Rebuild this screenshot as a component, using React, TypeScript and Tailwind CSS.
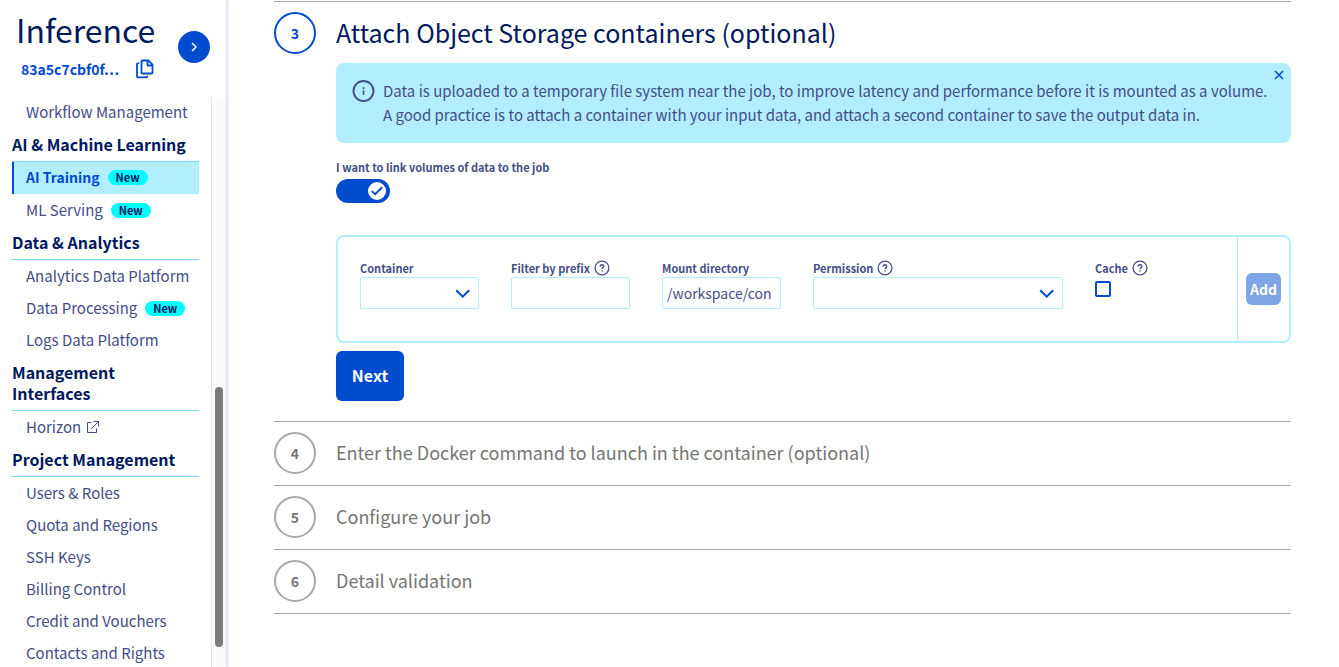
import { useState } from "react";
import type { ReactNode } from "react";

type NavItem = { label: string; isNew?: boolean; active?: boolean; external?: boolean };
type NavGroup = { title?: string; items: NavItem[] };

const groups: NavGroup[] = [
  { items: [{ label: "Workflow Management" }] },
  {
    title: "AI & Machine Learning",
    items: [
      { label: "AI Training", isNew: true, active: true },
      { label: "ML Serving", isNew: true },
    ],
  },
  {
    title: "Data & Analytics",
    items: [
      { label: "Analytics Data Platform" },
      { label: "Data Processing", isNew: true },
      { label: "Logs Data Platform" },
    ],
  },
  { title: "Management Interfaces", items: [{ label: "Horizon", external: true }] },
  {
    title: "Project Management",
    items: [
      { label: "Users & Roles" },
      { label: "Quota and Regions" },
      { label: "SSH Keys" },
      { label: "Billing Control" },
      { label: "Credit and Vouchers" },
      { label: "Contacts and Rights" },
    ],
  },
];

function CopyIcon() {
  return (
    <svg className="h-5 w-5" viewBox="0 0 20 20" fill="none" stroke="currentColor" strokeWidth="1.8" strokeLinejoin="round" strokeLinecap="round">
      <path d="M7.300 1.500h6L17.500 5.700v8a.8.8 0 0 1-.8.8H7.300a.8.8 0 0 1-.8-.8V2.300a.8.8 0 0 1 .8-.8Z" />
      <path d="M12.500 2v4.500h4.600" />
      <path d="M3.500 4.300h-.6a.9.9 0 0 0-.9.9v12.200a.9.9 0 0 0 .9.9h8.500a.9.9 0 0 0 .9-.9" />
    </svg>
  );
}

function ExternalIcon() {
  return (
    <svg className="h-3 w-3" viewBox="0 0 12 12" fill="none" stroke="currentColor">
      <path d="M4.500 1.500h-4v10h9V7.500M6.500 .5h5v5M11.500 .5 4 8" />
    </svg>
  );
}

function HelpIcon() {
  return (
    <svg className="h-4 w-4 shrink-0" viewBox="0 0 16 16" fill="none" stroke="currentColor">
      <circle cx="8" cy="8" r="6.900" strokeWidth="1.300" />
      <path d="M6.200 6.500c0-1.100.8-1.800 1.800-1.800s1.800.7 1.800 1.600c0 1.300-1.700 1.400-1.700 2.800" strokeWidth="1.400" />
      <path d="M8.100 10.200v1.400" strokeWidth="1.500" />
    </svg>
  );
}

function Chevron() {
  return (
    <svg className="pointer-events-none absolute right-2 top-3 h-2.5 w-4" viewBox="0 0 16 10" fill="none" stroke="#004bce" strokeWidth="2">
      <path d="m1.200 1.200 6.500 6.500 6.500-6.500" />
    </svg>
  );
}

function Badge() {
  return <span className="ml-2 rounded-full bg-[#00fdff] px-2 text-[11px] leading-[15px] font-bold text-[#00185e]">New</span>;
}

function Sidebar() {
  return (
    <aside className="z-10 flex w-[226px] shrink-0 flex-col bg-white shadow-[1px_0_3px_1px_#dcdff2]">
      <header className="flex h-[97px] shrink-0 items-start justify-between pr-4 pl-4">
        <div>
          <h1 className="mt-1.5 pb-0.5 text-[32px] leading-[46px] text-[#00185e]">Inference</h1>
          <div className="flex items-center gap-4 pl-[5px]">
            <span className="text-sm leading-[30px] font-semibold text-[#004bce]">83a5c7cbf0f…</span>
            <button type="button" aria-label="Copy project ID" className="text-[#004bce]">
              <CopyIcon />
            </button>
          </div>
        </div>
        <button type="button" aria-label="Collapse menu" className="mt-[31px] flex size-8 shrink-0 items-center justify-center rounded-full bg-[#004bce] text-white">
          <svg className="h-3 w-2" viewBox="0 0 8 12" fill="none" stroke="currentColor" strokeWidth="1.500">
            <path d="m2 2 4 4-4 4" />
          </svg>
        </button>
      </header>
      <div className="flex min-h-0 grow">
        <nav aria-label="Public Cloud" className="-mt-px grow overflow-hidden pr-3 pl-3">
          {groups.map((group, i) => (
            <section key={i}>
              {group.title && (
                <h2 className="border-b border-[#7cd5fb] py-1.5 pr-2 text-base leading-[21px] font-bold text-[#00185e]">{group.title}</h2>
              )}
              <ul>
                {group.items.map((item) => (
                  <li key={item.label}>
                    <a
                      href="#"
                      aria-current={item.active ? "page" : undefined}
                      className={
                        item.active
                          ? "flex h-8 items-center border-l-2 border-[#004bce] bg-[#b2eeff] pb-0.5 pl-3 text-sm font-semibold whitespace-nowrap text-[#004bce]"
                          : "flex h-8 items-center pl-3.5 text-[15px] whitespace-nowrap text-[#454d88]"
                      }
                    >
                      {item.label}
                      {item.isNew && <Badge />}
                      {item.external && (
                        <span className="ml-1.5">
                          <ExternalIcon />
                        </span>
                      )}
                    </a>
                  </li>
                ))}
              </ul>
            </section>
          ))}
        </nav>
        <div aria-hidden="true" className="flex w-[15px] shrink-0 flex-col items-center border-l border-[#e4e4e6] bg-[#fafafa]">
          <div className="grow-[290] basis-0" />
          <div className="w-2 grow-[260] basis-0 rounded-full bg-[#7b7b7b]" />
          <div className="grow-[20] basis-0" />
        </div>
      </div>
    </aside>
  );
}

function Step({ number, title, active, children }: { number: number; title: string; active?: boolean; children?: ReactNode }) {
  return (
    <section className="border-t border-[#a8a8a8]">
      <div className="flex items-center gap-5 pt-2.5">
        <span
          className={
            active
              ? "flex size-[42px] shrink-0 items-center justify-center rounded-full border-2 border-[#004bce] text-sm font-bold text-[#004bce]"
              : "flex size-[42px] shrink-0 items-center justify-center rounded-full border-2 border-[#a8a8a8] text-sm font-bold text-[#757575]"
          }
        >
          {number}
        </span>
        <h2 className={active ? "pb-0.5 text-[25px] leading-8 text-[#00185e]" : "pb-0.5 text-lg text-[#757575]"}>{title}</h2>
      </div>
      {children}
    </section>
  );
}

function Field({ id, label, help, children }: { id: string; label: string; help?: boolean; children: ReactNode }) {
  return (
    <div className="min-w-0">
      <div className="flex h-[18px] items-center gap-1 text-[#454d88]">
        <label htmlFor={id} className="text-[11px] leading-[18px] font-bold whitespace-nowrap">
          {label}
        </label>
        {help && <HelpIcon />}
      </div>
      {children}
    </div>
  );
}

const control = "block h-8 w-full appearance-none rounded-xs border border-[#b2eeff] bg-white px-1 text-sm text-[#454d88] outline-none";

function VolumeForm() {
  const [cache, setCache] = useState(false);
  return (
    <div className="mt-8 flex rounded-lg border-2 border-[#b2eeff]">
      <div className="grid h-[104px] grow grid-cols-[119fr_119fr_119fr_250fr_119fr] gap-8 pt-[22px] pr-[23px] pl-[22px]">
        <Field id="container" label="Container">
          <div className="relative">
            <select id="container" className={control} />
            <Chevron />
          </div>
        </Field>
        <Field id="prefix" label="Filter by prefix" help>
          <input id="prefix" type="text" className={control} />
        </Field>
        <Field id="mount" label="Mount directory">
          <input id="mount" type="text" defaultValue="/workspace/con" className={control} />
        </Field>
        <Field id="permission" label="Permission" help>
          <div className="relative">
            <select id="permission" className={control} />
            <Chevron />
          </div>
        </Field>
        <Field id="cache" label="Cache" help>
          <input
            id="cache"
            type="checkbox"
            checked={cache}
            onChange={(e) => setCache(e.target.checked)}
            className="mt-1 block size-4 appearance-none rounded-xs border-2 border-[#004bce] checked:bg-[#004bce]"
          />
        </Field>
      </div>
      <div className="flex items-center border-l border-[#b2eeff] px-2">
        <button type="button" disabled className="h-8 w-[35px] rounded-md bg-[#80a5e6] text-sm font-bold text-white">
          Add
        </button>
      </div>
    </div>
  );
}

export default function App() {
  const [linked, setLinked] = useState(true);
  return (
    <div className="flex h-screen overflow-hidden bg-white font-['Noto_Sans_CJK_SC',sans-serif]">
      <Sidebar />
      <main className="min-w-0 grow pt-px pr-12 pl-12">
        <Step number={3} title="Attach Object Storage containers (optional)" active>
          <div className="mt-[9px] mb-5 pl-[62px]">
            <div role="status" className="relative flex gap-2 rounded-lg bg-[#b2eeff] py-4 pr-3 pl-[15px] text-[15px] leading-6 text-[#454d88]">
              <svg className="h-6 w-6 shrink-0" viewBox="0 0 24 24" fill="none" stroke="currentColor">
                <circle cx="12.500" cy="12" r="10" strokeWidth="1.900" />
                <path d="M12.500 8.300v1.700M12.500 11.200v4.600" strokeWidth="1.700" />
              </svg>
              <p>
                Data is uploaded to a temporary file system near the job, to improve latency and performance before it is mounted as a volume.
                <br />A good practice is to attach a container with your input data, and attach a second container to save the output data in.
              </p>
              <button type="button" aria-label="Close" className="absolute top-[7px] right-[7px] text-[#004bce]">
                <svg className="size-2.5" viewBox="0 0 10 10" fill="none" stroke="currentColor" strokeWidth="1.500">
                  <path d="m1 1 8 8M9 1 1 9" />
                </svg>
              </button>
            </div>
            <label htmlFor="link-volumes" className="mt-3.5 block pb-0.5 text-[11px] leading-5 font-bold text-[#454d88]">
              I want to link volumes of data to the job
            </label>
            <div className="relative h-6 w-[54px]">
              <input
                id="link-volumes"
                type="checkbox"
                role="switch"
                checked={linked}
                onChange={(e) => setLinked(e.target.checked)}
                className="peer block h-6 w-[54px] appearance-none rounded-full bg-[#a8a8a8] checked:bg-[#004bce]"
              />
              <span className="pointer-events-none absolute top-[3px] left-1 flex size-[18px] items-center justify-center rounded-full bg-white peer-checked:left-8">
                <svg className="h-3 w-3" viewBox="0 0 12 12" fill="none" stroke="#004bce" strokeWidth="1.900" strokeLinecap="round">
                  <path d="m1.300 6.600 2.800 2.600 6.600-6.400" />
                </svg>
              </span>
            </div>
            <VolumeForm />
            <button type="button" className="mt-2 h-[50px] w-[68px] rounded-md bg-[#004bce] pb-0.5 text-base font-bold text-white">
              Next
            </button>
          </div>
        </Step>
        <div className="border-b border-[#a8a8a8]">
          <div className="pb-[11px]">
            <Step number={4} title="Enter the Docker command to launch in the container (optional)" />
          </div>
          <div className="pb-[11px]">
            <Step number={5} title="Configure your job" />
          </div>
          <div className="pb-[11px]">
            <Step number={6} title="Detail validation" />
          </div>
        </div>
      </main>
    </div>
  );
}
